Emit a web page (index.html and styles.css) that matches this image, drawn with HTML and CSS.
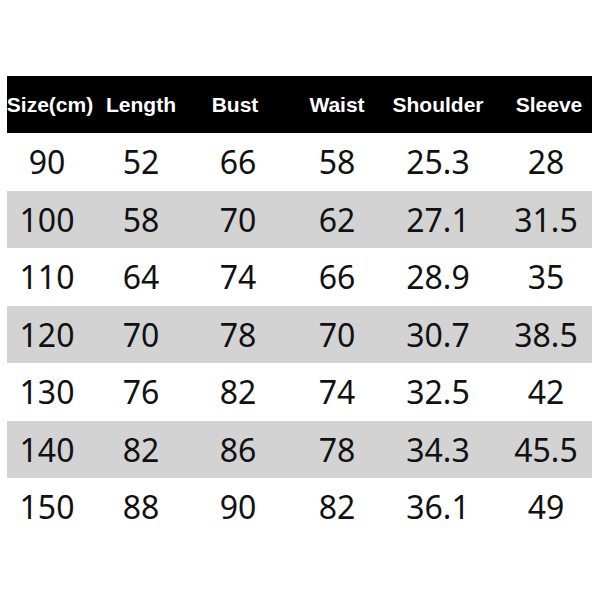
FILE: index.html
```html
<!DOCTYPE html>
<html>
<head>
<meta charset="utf-8">
<link rel="stylesheet" href="styles.css">
</head>
<body>
<div class="chart">
  <div class="row head">
    <div class="cell c1">Size(cm)</div>
    <div class="cell c2">Length</div>
    <div class="cell c3">Bust</div>
    <div class="cell c4">Waist</div>
    <div class="cell c5">Shoulder</div>
    <div class="cell c6">Sleeve</div>
  </div>
  <div class="row">
    <div class="cell c1">90</div><div class="cell c2">52</div><div class="cell c3">66</div><div class="cell c4">58</div><div class="cell c5">25.3</div><div class="cell c6">28</div>
  </div>
  <div class="row alt">
    <div class="cell c1">100</div><div class="cell c2">58</div><div class="cell c3">70</div><div class="cell c4">62</div><div class="cell c5">27.1</div><div class="cell c6">31.5</div>
  </div>
  <div class="row">
    <div class="cell c1">110</div><div class="cell c2">64</div><div class="cell c3">74</div><div class="cell c4">66</div><div class="cell c5">28.9</div><div class="cell c6">35</div>
  </div>
  <div class="row alt">
    <div class="cell c1">120</div><div class="cell c2">70</div><div class="cell c3">78</div><div class="cell c4">70</div><div class="cell c5">30.7</div><div class="cell c6">38.5</div>
  </div>
  <div class="row">
    <div class="cell c1">130</div><div class="cell c2">76</div><div class="cell c3">82</div><div class="cell c4">74</div><div class="cell c5">32.5</div><div class="cell c6">42</div>
  </div>
  <div class="row alt">
    <div class="cell c1">140</div><div class="cell c2">82</div><div class="cell c3">86</div><div class="cell c4">78</div><div class="cell c5">34.3</div><div class="cell c6">45.5</div>
  </div>
  <div class="row">
    <div class="cell c1">150</div><div class="cell c2">88</div><div class="cell c3">90</div><div class="cell c4">82</div><div class="cell c5">36.1</div><div class="cell c6">49</div>
  </div>
</div>
</body>
</html>
```
FILE: styles.css
```css
html, body {
  margin: 0;
  padding: 0;
  background: #ffffff;
}
.chart {
  margin: 76px 8px 0 7px;
  width: 585px;
}
.row {
  display: grid;
  grid-template-columns: 80px 108px 86px 112px 90px 109px;
  height: 57.5px;
  font-family: "Noto Sans", "Open Sans", sans-serif;
  font-size: 32px;
  color: #111111;
}
.row.alt {
  background: #d3d3d3;
}
.row.head {
  height: 57px;
  background: #000000;
  color: #ffffff;
  font-family: "Liberation Sans", Arial, sans-serif;
  font-weight: bold;
  font-size: 21px;
}
.cell {
  display: flex;
  align-items: center;
  justify-content: center;
  white-space: nowrap;
}
.row .c6 {
  padding-left: 17px;
}
.head .c1 {
  padding-left: 6px;
}
.head .c3 {
  padding-right: 6px;
}
.head .c6 {
  padding-left: 23px;
}
```
